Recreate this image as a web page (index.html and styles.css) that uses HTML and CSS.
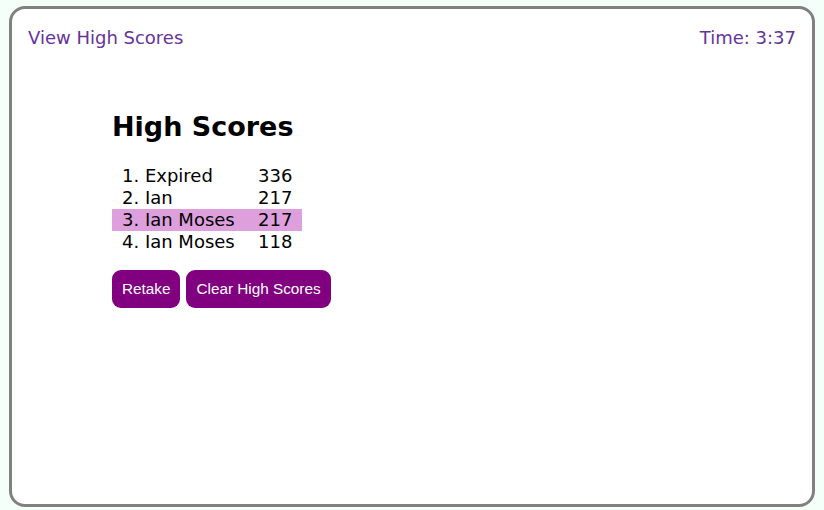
FILE: index.html
```html
<!DOCTYPE html>
<html>
<head>
<meta charset="utf-8">
<link rel="stylesheet" href="styles.css">
</head>
<body>
<div class="card">
  <div class="topbar">
    <a class="link">View High Scores</a>
    <span class="timer">Time: 3:37</span>
  </div>
  <div class="content">
    <h1 class="title">High Scores</h1>
    <div class="scores">
      <div class="row"><span class="name">1. Expired</span><span class="score">336</span></div>
      <div class="row"><span class="name">2. Ian</span><span class="score">217</span></div>
      <div class="row current"><span class="name">3. Ian Moses</span><span class="score">217</span></div>
      <div class="row"><span class="name">4. Ian Moses</span><span class="score">118</span></div>
    </div>
    <div class="buttons">
      <button class="btn">Retake</button>
      <button class="btn">Clear High Scores</button>
    </div>
  </div>
</div>
</body>
</html>
```
FILE: styles.css
```css
html, body {
  margin: 0;
  padding: 0;
  background: #f5fffa;
}
body {
  padding: 6px 9px 3px 9px;
  font-family: "DejaVu Sans", Verdana, sans-serif;
}
.card {
  box-sizing: border-box;
  width: 806px;
  height: 501px;
  background: #fff;
  border: 3px solid #808080;
  border-radius: 16px;
  padding: 15px 16px 0 16px;
}
.topbar {
  display: flex;
  justify-content: space-between;
  font-size: 18px;
  line-height: 28px;
  color: #663399;
}
.link {
  color: #663399;
}
.content {
  margin-left: 84px;
  padding-top: 58px;
}
.title {
  font-size: 27px;
  font-weight: bold;
  margin: 0 0 21px 0;
  line-height: 34px;
}
.scores {
  width: 190px;
  font-size: 18px;
  line-height: 22px;
}
.row {
  display: grid;
  grid-template-columns: 136px 1fr;
  padding-left: 10px;
}
.row.current {
  background: #dda0dd;
}
.buttons {
  display: flex;
  gap: 6px;
  margin-top: 17px;
}
.btn {
  background: #800080;
  color: #fff;
  border: none;
  border-radius: 9px;
  height: 38px;
  padding: 0 10px;
  font-family: "Liberation Sans", Arial, sans-serif;
  font-size: 15.3px;
}
```
